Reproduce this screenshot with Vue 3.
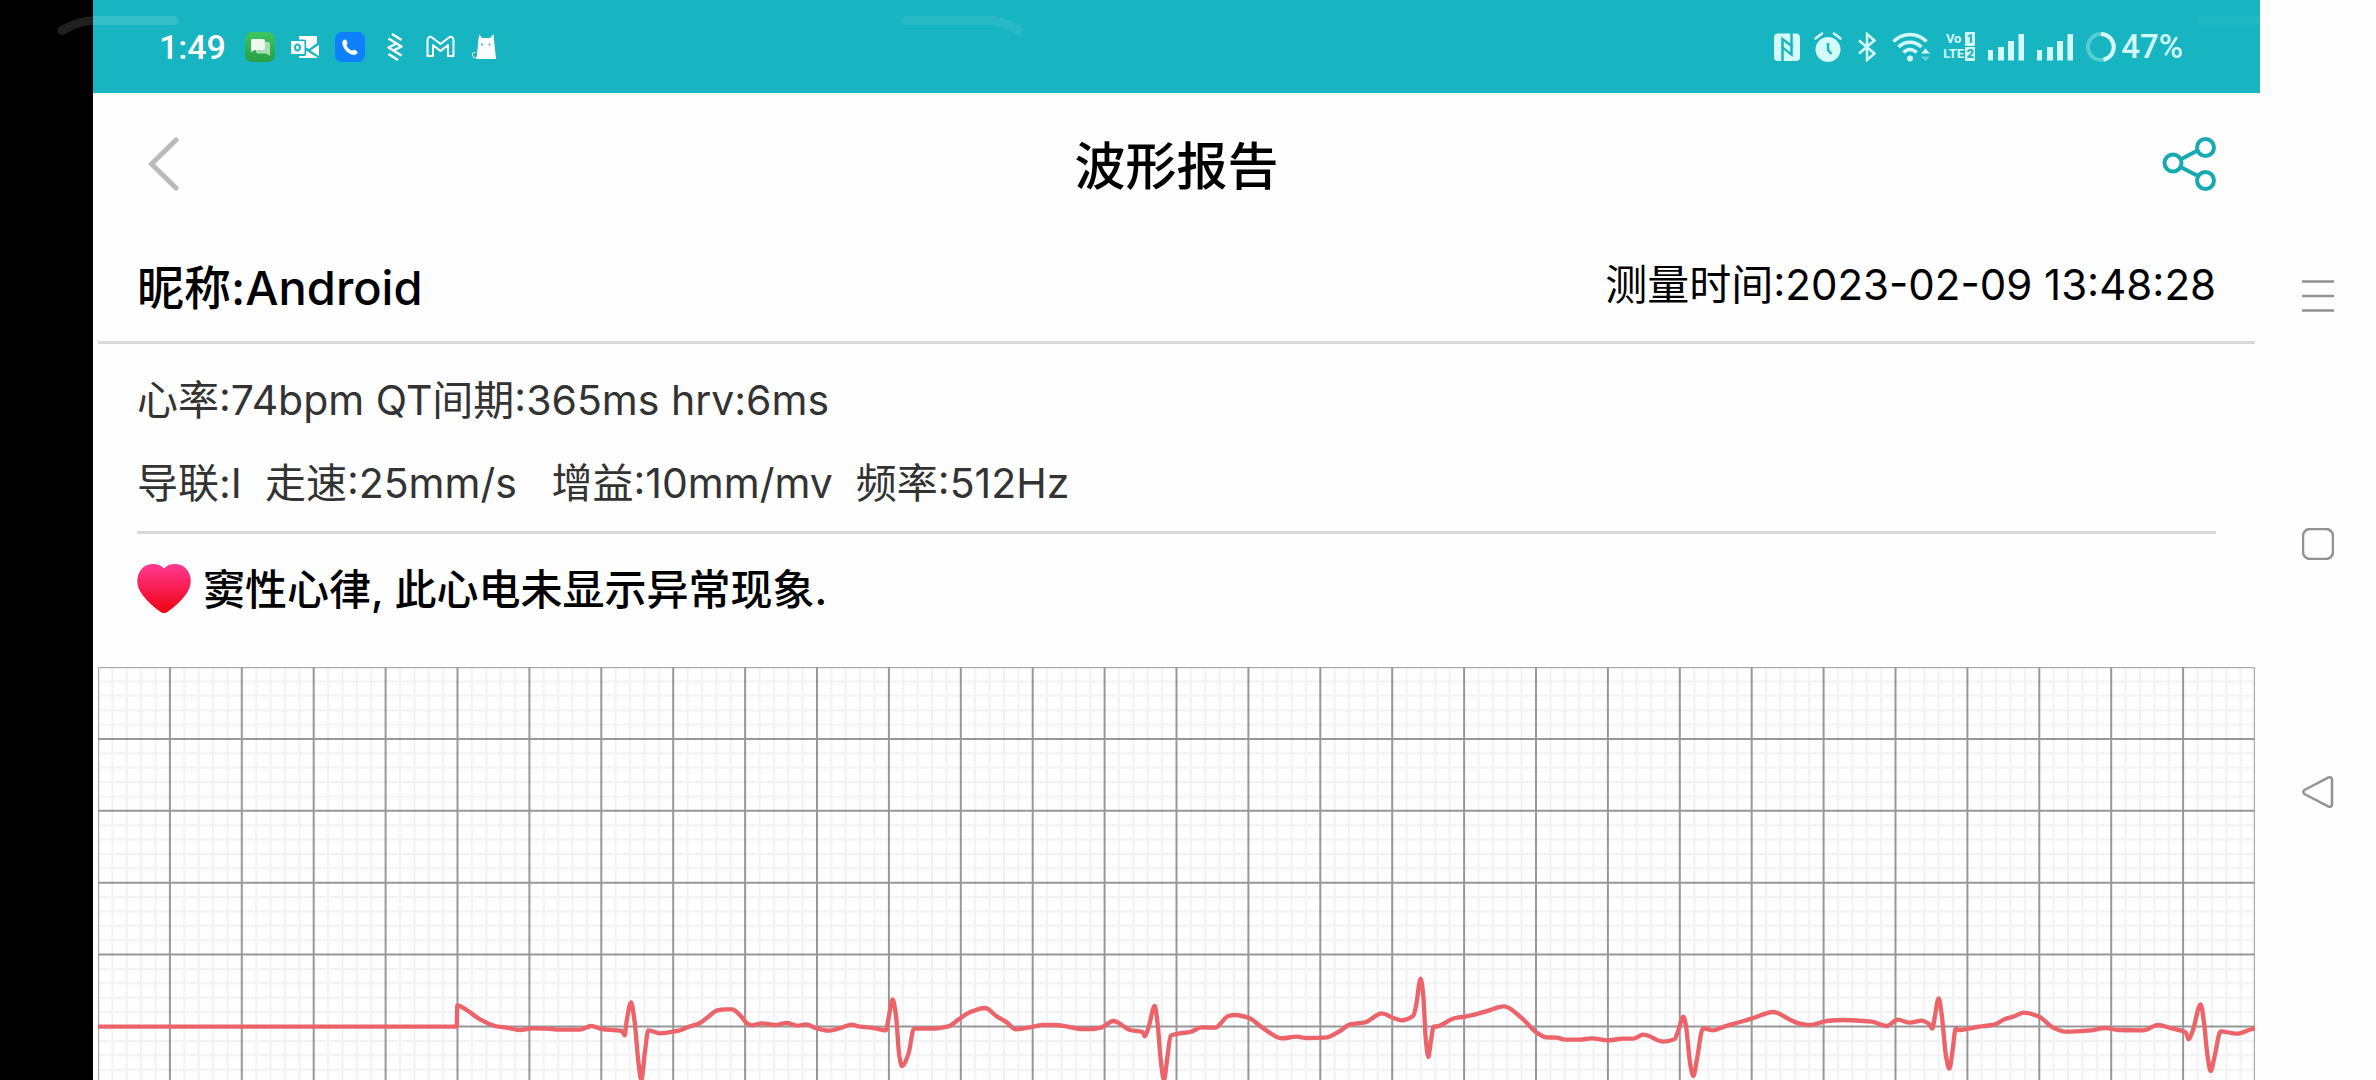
<script setup>
const report = {
  title: '波形报告',
  nickname: '昵称:Android',
  measuredAt: '测量时间:2023-02-09 13:48:28',
  vitals: '心率:74bpm QT间期:365ms hrv:6ms',
  settings: '导联:I  走速:25mm/s   增益:10mm/mv  频率:512Hz',
  conclusion: '窦性心律, 此心电未显示异常现象.',
}

// chart units: one large square is a thirtieth of the width
const chart = { width: 6471, height: 1239, square: 215.7 }

function gridPath(step, skip) {
  let d = ''
  for (let i = 1; i * step < chart.width - 10; i++) {
    if (i % skip) d += `M${i * step} 0V${chart.height}`
  }
  for (let i = 1; i * step < chart.height; i++) {
    if (i % skip) d += `M0 ${i * step}H${chart.width}`
  }
  return d
}

const minorGrid = gridPath(chart.square / 5, 5)
const majorGrid = gridPath(chart.square, Infinity)

const baseline = 822

const strips = [
  {
    start: 1026,
    samples: [
      [-1026, 257], [50, 257], [52, 193], [80, 207], [120, 235], [165, 255], [200, 260], [240, 267],
      [280, 262], [320, 263], [360, 266], [420, 266], [453, 255], [485, 264], [545, 270], [554, 283],
      [560, 240], [573, 184], [583, 235], [596, 370], [604, 417], [615, 330], [625, 268], [660, 277],
      [715, 269], [745, 258], [780, 246], [805, 227], [832, 208], [855, 205], [876, 205], [905, 228],
      [920, 246], [935, 253], [965, 247], [1005, 252], [1040, 246], [1072, 254], [1098, 250],
      [1130, 262], [1165, 269], [1205, 260], [1235, 251], [1260, 257], [1300, 261], [1338, 268],
      [1345, 235], [1358, 175], [1368, 225], [1378, 345], [1386, 375], [1405, 340], [1422, 263],
    ],
  },
  {
    start: 2406,
    samples: [
      [95, 263], [145, 256], [175, 236], [205, 216], [255, 201], [290, 226], [320, 244], [348, 265],
      [400, 257], [430, 252], [460, 252], [500, 256], [540, 264], [575, 264], [605, 259], [640, 240],
      [690, 267], [728, 273], [734, 286], [745, 262], [764, 195], [772, 240], [783, 365], [792, 417],
      [802, 350], [812, 284], [840, 277], [870, 273], [905, 259], [945, 260], [985, 225], [1005, 222],
      [1045, 230], [1090, 262], [1145, 292], [1190, 287], [1220, 291], [1275, 290], [1320, 270],
      [1350, 250], [1395, 244], [1445, 217],
    ],
  },
  {
    start: 3786,
    samples: [
      [100, 231], [125, 238], [160, 224], [168, 195], [182, 113], [190, 165], [197, 290], [205, 348],
      [212, 305], [221, 257], [232, 256], [285, 231], [315, 227], [375, 212], [432, 196], [485, 231],
      [530, 275], [560, 289], [590, 290], [615, 296], [660, 296], [695, 292], [745, 298], [790, 293],
      [820, 293], [850, 281], [910, 302], [943, 295], [955, 268], [970, 227], [978, 255], [990, 365],
      [1000, 405], [1010, 360], [1029, 262], [1060, 268], [1095, 256], [1140, 243], [1180, 231],
      [1240, 213], [1290, 236], [1320, 248],
    ],
  },
  {
    start: 5106,
    samples: [
      [30, 252], [80, 240], [130, 237], [215, 242], [260, 255], [293, 236], [330, 245], [365, 239],
      [388, 250], [397, 263], [404, 230], [416, 172], [425, 220], [438, 345], [448, 383], [457, 335],
      [467, 263], [475, 267], [530, 258], [585, 250], [615, 234], [640, 227], [672, 215], [715, 226],
      [760, 260], [795, 272], [875, 268], [915, 261], [955, 267], [1030, 268], [1075, 252],
      [1110, 261], [1157, 274], [1166, 295], [1178, 270], [1202, 190], [1212, 245], [1222, 340],
      [1232, 390], [1243, 350], [1262, 271], [1310, 278], [1365, 263],
    ],
  },
]

const points = strips.flatMap(({ start, samples }) =>
  samples.map(([x, y]) => [start + x, baseline + y]),
)

// monotone curve, so the peaks never overshoot their samples
function curve(pts) {
  const slope = (a, b) => (b[1] - a[1]) / (b[0] - a[0])
  const tangents = pts.map((p, i) => {
    if (i === 0 || i === pts.length - 1) return 0
    const before = slope(pts[i - 1], p)
    const after = slope(p, pts[i + 1])
    return before * after <= 0 ? 0 : (2 * before * after) / (before + after)
  })
  let d = `M${pts[0]}`
  for (let i = 1; i < pts.length; i++) {
    const [x0, y0] = pts[i - 1]
    const [x1, y1] = pts[i]
    const third = (x1 - x0) / 3
    d += `C${x0 + third} ${y0 + tangents[i - 1] * third} ${x1 - third} ${y1 - tangents[i] * third} ${x1} ${y1}`
  }
  return d
}

const trace = curve(points)
</script>

<template>
  <div class="device">
    <div class="notch"></div>

    <main class="screen">
      <div class="status-bar">
        <div class="status-left">
          <time class="clock">1:49</time>
          <svg width="30" height="30" viewBox="0 0 30 30">
            <defs>
              <linearGradient id="chat" x1="0" y1="0" x2="0" y2="1">
                <stop offset="0" stop-color="#3fc663" />
                <stop offset="1" stop-color="#26a044" />
              </linearGradient>
            </defs>
            <rect width="30" height="30" rx="7" fill="url(#chat)" />
            <path d="M13 10h10q2 0 2 2v12l-4-2.500h-8q-2 0-2-2v-7.500q0-2 2-2z" fill="#a5dcb2" />
            <path d="M7 7h11q2 0 2 2v7q0 2-2 2h-8l-4 2V8q0-1 1-1z" fill="#eefaf0" />
          </svg>
          <svg width="30" height="30" viewBox="0 0 30 30">
            <path
              fill="#fff"
              fill-rule="evenodd"
              d="M2 9h11.500q1 0 1 1v11q0 1-1 1H2q-1 0-1-1V10q0-1 1-1zm5.500 2.500c-2.200 0-3.500 1.700-3.500 4s1.300 4 3.500 4 3.500-1.700 3.500-4-1.300-4-3.500-4zm0 2c1 0 1.400.9 1.400 2s-.4 2-1.400 2-1.400-.9-1.400-2 .4-2 1.400-2z"
            />
            <path d="M9 4h17q1 0 1 1v6l-8 6-3-1.500V9q0-1.500-1.500-1.500H9z" fill="#fff" />
            <path d="M29 13v11l-8.500-5.500zM16 18.500l11.500 7q-.5.500-1 .5H9v-2h5.500q1.500 0 1.500-1.500z" fill="#fff" />
          </svg>
          <svg width="30" height="30" viewBox="0 0 30 30">
            <rect width="30" height="30" rx="7" fill="#0c80ff" />
            <path
              d="M8.500 8.200c1.500-1.200 2.600-.6 3.400 1 .8 1.700.9 2.500-.5 3.800.9 2.600 2.800 4.600 5.700 5.700 1.400-1.300 2.200-1 3.800-.1 1.700.9 2.200 1.900 1 3.200-1.600 1.700-4.600 1.500-7.800-.5C10.500 19 8.300 16 7.500 12.500c-.4-1.900-.2-3.400 1-4.300z"
              fill="#fff"
            />
          </svg>
          <svg width="30" height="30" viewBox="0 0 30 30">
            <path
              d="M12 2l9.500 6M8.500 6.500l13 8-9 4.500M18 28l-9.500-6M21.500 23.500l-13-8 9-4.500"
              fill="none"
              stroke="#fff"
              stroke-width="2.500"
              stroke-linejoin="round"
            />
          </svg>
          <svg width="30" height="30" viewBox="0 0 30 30">
            <path
              d="M2.500 24V8c0-3 2.500-4 4.500-2.500l8.500 6.500L24 5.500c2-1.500 4.500-.5 4.500 2.500v16h-5.500V13l-7.500 6L8 13v11z"
              fill="none"
              stroke="#fff"
              stroke-width="2"
              stroke-linejoin="round"
            />
          </svg>
          <svg width="30" height="30" viewBox="0 0 30 30">
            <path d="M6.500 27l2-20 1-4.500L12 6h8l3.500-4 .5 5.500L26 27z" fill="#fff" />
            <path d="M8 25.500c-4 1-6-1-5.500-3.500.3-1.300 1.500-2 3-1.500" fill="none" stroke="#fff" />
            <circle cx="12" cy="12.500" r="1" fill="#17b5c1" />
            <circle cx="19.500" cy="12.500" r="1" fill="#17b5c1" />
          </svg>
        </div>

        <div class="status-right">
          <svg width="28" height="30" viewBox="0 0 28 30">
            <rect x="1" y="1.500" width="26" height="27.500" rx="4" fill="#d5fafa" />
            <path
              d="M9.500 29V7l10.500 8M18.500 1v21.500L8.500 14.500"
              fill="none"
              stroke="#17b5c1"
              stroke-width="2.500"
            />
            <path d="M11 10l6 5v5l-6-5z" fill="#d5fafa" />
          </svg>
          <svg width="28" height="30" viewBox="0 0 28 30">
            <circle cx="14" cy="17.500" r="12.500" fill="#d5fafa" />
            <path d="M1.500 6.500L8 1.500M26.500 6.500L20 1.500" stroke="#d5fafa" stroke-width="2.500" stroke-linecap="round" />
            <path d="M14 11v7l3.500 4" fill="none" stroke="#17b5c1" stroke-width="2.500" />
          </svg>
          <svg width="24" height="30" viewBox="0 0 24 30">
            <path
              d="M4 8.500l15.500 13L12 28V2l7.500 6.500L4 21.500"
              fill="none"
              stroke="#d5fafa"
              stroke-width="2.500"
            />
          </svg>
          <svg width="38" height="30" viewBox="0 0 38 30">
            <g fill="none" stroke="#d5fafa" stroke-width="3.500">
              <path d="M1.500 9.500c9-9.500 24-9.500 33 0" />
              <path d="M6.500 15c6.500-6.500 16.500-6.500 23 0" />
              <path d="M11.500 20.500c4-4 9-4 13 0" />
            </g>
            <circle cx="18" cy="26.500" r="3" fill="#d5fafa" />
            <path d="M29 21.500l4.500-5 4.500 5z" fill="#d5fafa" />
            <path d="M29 24.500l4.500 4.500 4.500-4.500z" fill="#68d0d8" />
          </svg>
          <div class="volte">
            <span>Vo</span><b>1</b>
            <span>LTE</span><b>2</b>
          </div>
          <svg v-for="sim in 2" :key="sim" width="36" height="30" viewBox="0 0 36 30">
            <path d="M0 18h5v10.500H0zM10 15h6v13.500h-6zM20 9h6v19.500h-6zM30.500 2H36v26.500h-5.500z" fill="#d5fafa" />
          </svg>
          <div class="battery">
            <svg width="30" height="30" viewBox="0 0 30 30">
              <circle cx="15" cy="15" r="13" fill="none" stroke="#57cdd5" stroke-width="4" />
              <path d="M15 2a13 13 0 0 1 2.500 25.700" fill="none" stroke="#d5fafa" stroke-width="4" />
            </svg>
            <span>47%</span>
          </div>
        </div>
      </div>

      <header class="title-bar">
        <button type="button" class="icon-button" aria-label="返回">
          <svg width="54" height="54" viewBox="0 0 54 54">
            <path
              d="M39 3L14.500 27l24.500 24"
              fill="none"
              stroke="#bababa"
              stroke-width="5"
              stroke-linecap="round"
            />
          </svg>
        </button>
        <h1>{{ report.title }}</h1>
        <button type="button" class="icon-button share" aria-label="分享">
          <svg width="54" height="54" viewBox="0 0 54 54">
            <g fill="none" stroke="#17aab2" stroke-width="4">
              <circle cx="11" cy="26" r="8.500" />
              <circle cx="43.500" cy="10.500" r="8.500" />
              <circle cx="43.500" cy="43.500" r="8.500" />
              <path d="M18.500 22.500l17-9M18.500 30l17.500 9" />
            </g>
          </svg>
        </button>
      </header>

      <article class="report">
        <section class="patient">
          <h2>{{ report.nickname }}</h2>
          <time>{{ report.measuredAt }}</time>
        </section>

        <section class="details">
          <p>{{ report.vitals }}</p>
          <p>{{ report.settings }}</p>
        </section>

        <section class="conclusion">
          <svg width="54" height="50" viewBox="0 0 54 50">
            <defs>
              <linearGradient id="heart" x1="0" y1="0" x2="0" y2="1">
                <stop offset="0" stop-color="#ff3a92" />
                <stop offset="1" stop-color="#f00010" />
              </linearGradient>
            </defs>
            <path
              d="M27 4.500C22-1.500 11-1.500 5.500 4-1.500 11-1.500 22 5.500 31c5 6.500 11 12 17.500 16.500q4 3 8 0C37.500 43 43.500 37.500 48.500 31c7-9 7-20 0-27C43-1.500 32-1.500 27 4.500z"
              fill="url(#heart)"
            />
          </svg>
          <p>{{ report.conclusion }}</p>
        </section>

        <svg class="chart" :viewBox="`0 0 ${chart.width} ${chart.height}`" role="img" aria-label="心电波形">
          <path :d="minorGrid" class="minor" />
          <path :d="majorGrid" class="major" />
          <path :d="`M2 ${chart.height}V2H${chart.width - 2}V${chart.height}`" class="frame" />
          <path :d="trace" class="trace" />
        </svg>
      </article>
    </main>

    <nav class="system-nav">
      <button type="button" class="icon-button" aria-label="最近任务">
        <svg width="32" height="32" viewBox="0 0 32 32">
          <path d="M0 1.500h32M0 16h32M0 30.500h32" stroke="#929292" stroke-width="2.500" />
        </svg>
      </button>
      <button type="button" class="icon-button" aria-label="主屏幕">
        <svg width="32" height="32" viewBox="0 0 32 32">
          <rect x="1" y="1" width="30" height="30" rx="7" fill="none" stroke="#929292" stroke-width="2.500" />
        </svg>
      </button>
      <button type="button" class="icon-button" aria-label="返回上一页">
        <svg width="32" height="32" viewBox="0 0 32 32">
          <path
            d="M2.500 14L26.500 1.500Q30 .5 30 4v24q0 3.500-3.500 2.500L2.500 18q-2.500-2 0-4z"
            fill="none"
            stroke="#929292"
            stroke-width="2.500"
          />
        </svg>
      </button>
    </nav>

    <svg class="edge-marks" width="1120" height="40" viewBox="0 0 1120 40">
      <g fill="none" stroke="#fff" stroke-width="9" stroke-linecap="round">
        <path d="M62 30.500Q79 20.500 95 20.500H174" opacity=".12" />
        <path d="M906 20.500h85q12 0 27 10" opacity=".07" />
      </g>
    </svg>
    <div class="edge-mark-right"></div>
  </div>
</template>

<style>
body {
  margin: 0;
  background: #fff;
}
</style>

<style scoped>
.device {
  position: relative;
  display: grid;
  grid-template-columns: 93px minmax(0, 1fr) 116px;
  min-height: 100vh;
  overflow: hidden;
  background: #fdfdfd;
  color: #000;
  font-family: Inter, 'Noto Sans CJK SC', sans-serif;
}

svg {
  display: block;
  flex: none;
}

h1,
h2,
p {
  margin: 0;
}

.notch {
  background: #000;
}

.screen {
  background: #fefefe;
}

.status-bar {
  display: flex;
  align-items: center;
  justify-content: space-between;
  height: 93px;
  padding: 0 77px 0 66px;
  background: #17b5c1;
  font-family: Roboto, sans-serif;
  font-weight: 500;
}

.status-left,
.status-right {
  display: flex;
  align-items: center;
}

.status-left {
  gap: 15px;
}

.status-right {
  gap: 13px;
  color: #d5fafa;
}

.clock {
  margin-right: 4px;
  color: #fff;
  font-size: 34px;
}

.volte {
  display: grid;
  grid-template-columns: auto 10px;
  gap: 1px;
  font-size: 13px;
  font-weight: 700;
  line-height: 14px;
  text-align: center;
}

.volte b {
  border-radius: 1px;
  background: #d5fafa;
  color: #17b5c1;
}

.battery {
  display: flex;
  align-items: center;
  gap: 5px;
  font-size: 33px;
}

.title-bar {
  display: grid;
  grid-template-columns: 1fr auto 1fr;
  align-items: center;
  height: 141px;
  padding: 0 44px;
}

.title-bar h1 {
  padding-top: 6px;
  font-size: 51px;
  font-weight: 500;
  line-height: 60px;
}

.icon-button {
  padding: 0;
  border: 0;
  background: none;
  cursor: pointer;
  justify-self: start;
}

.icon-button.share {
  justify-self: end;
}

.report {
  padding: 0 5px;
}

.patient {
  display: flex;
  align-items: flex-start;
  justify-content: space-between;
  height: 83px;
  padding: 24px 39px 0;
  border-bottom: 3px solid #d9d9d9;
}

.patient h2 {
  font-size: 47px;
  font-weight: 500;
  line-height: 60px;
}

.patient time {
  font-size: 42px;
  line-height: 54px;
}

.details {
  margin: 0 39px;
  padding: 15px 0 6px;
  border-bottom: 3px solid #d9d9d9;
  color: #333;
  font-size: 41px;
  line-height: 83px;
  white-space: pre;
}

.conclusion {
  display: flex;
  align-items: center;
  gap: 12px;
  margin: 0 39px 24px;
  font-size: 42px;
  font-weight: 500;
  line-height: 106px;
}

.conclusion p {
  padding-top: 3px;
}

.chart {
  width: 100%;
}

.chart path {
  fill: none;
}

.chart .minor {
  stroke: #f3f3f3;
  stroke-width: 6;
}

.chart .major {
  stroke: #000;
  stroke-opacity: 0.4;
  stroke-width: 6;
}

.chart .frame {
  stroke: #999;
  stroke-width: 3;
}

.chart .trace {
  stroke: #ec636a;
  stroke-width: 13;
  stroke-linejoin: round;
}

.system-nav {
  display: flex;
  flex-direction: column;
  align-items: center;
  justify-content: center;
  gap: 216px;
  padding-top: 8px;
  background: #fefefe;
}

.edge-marks {
  position: absolute;
  top: 0;
  left: 0;
  pointer-events: none;
}

.edge-mark-right {
  position: absolute;
  top: 16px;
  right: 116px;
  width: 62px;
  height: 9px;
  border-radius: 5px 0 0 5px;
  background: rgba(255, 255, 255, 0.03);
}
</style>
